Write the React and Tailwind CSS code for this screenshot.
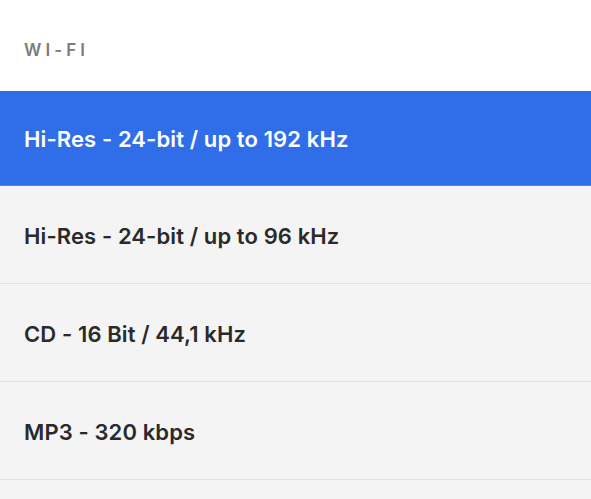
export default function App() {
  const options = [
    { label: "Hi-Res - 24-bit / up to 192 kHz", active: true },
    { label: "Hi-Res - 24-bit / up to 96 kHz" },
    { label: "CD - 16 Bit / 44,1 kHz" },
    { label: "MP3 - 320 kbps" },
  ];

  return (
    <div
      className="w-[591px] h-[499px] overflow-hidden bg-[#f4f4f4]"
      style={{ fontFamily: 'Inter, "Open Sans", "Liberation Sans", sans-serif' }}
    >
      <div className="h-[91px] bg-white flex items-center px-6">
        <span className="text-[17px] font-semibold tracking-[0.24em] text-[#7d7d7d] mt-[10px]">
          WI-FI
        </span>
      </div>
      {options.map((o) =>
        o.active ? (
          <div
            key={o.label}
            className="h-[95px] bg-[#306de8] flex items-center px-6 pt-[3px] border-b border-[#4d82ea]"
          >
            <span className="text-[22px] font-semibold tracking-[0.005em] text-white">{o.label}</span>
          </div>
        ) : (
          <div
            key={o.label}
            className="h-[98px] bg-[#f4f4f4] flex items-center px-6 pt-[3px] border-b border-[#e0e0e0]"
          >
            <span className="text-[22px] font-semibold tracking-[0.005em] text-[#2a2a2a]">{o.label}</span>
          </div>
        )
      )}
    </div>
  );
}
